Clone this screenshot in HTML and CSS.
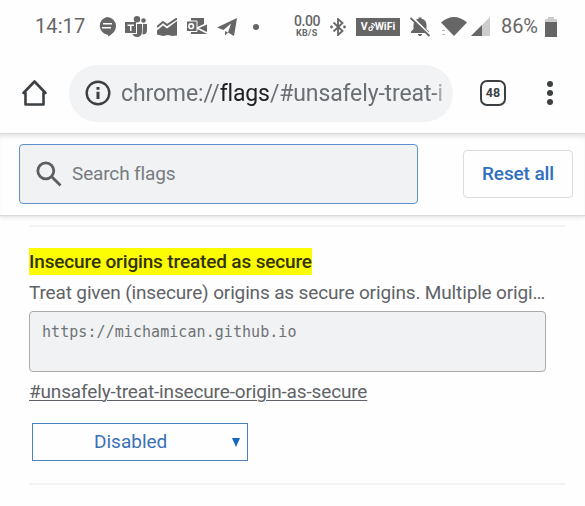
FILE: index.html
```html
<!DOCTYPE html>
<html lang="en">
<head>
<meta charset="utf-8">
<title>chrome://flags</title>
<link rel="stylesheet" href="styles.css">
</head>
<body>
<header class="status">
  <div class="group left">
    <span class="clock">14:17</span>
    <svg class="chat" width="18" height="20" viewBox="0 0 18 20"><path d="M9 0a9 9 0 0 1 9 9c0 5-4 8.500-8 10.500V17.800A9 9 0 0 1 9 0Z"/><path class="cut" d="M5 6h9v1.600H5zM4 10h9v1.600H4z"/></svg>
    <svg class="teams" width="23" height="22" viewBox="0 0 23 22"><circle cx="12" cy="3.200" r="3.200"/><circle cx="18.500" cy="4.500" r="2.300"/><path d="M12 8h5v7.500c0 3.500-2 5.500-5 5.500-2 0-3.800-1-4.500-3H12z"/><path d="M18 8h4v6c0 3-1.500 4.500-4.500 4.500z"/><path d="M0 6h11v11H0z"/><path class="cut" d="M2.500 8.500h6.500v1.500H6.500V15H5v-5H2.500z"/></svg>
    <svg class="chart" width="20" height="18" viewBox="0 0 20 18"><path d="M0 12.500 6 7.500l4 3L20 3v14.500l-5 .5-4-1-5 1L0 16.500z"/><path class="line" d="M0 9 6 4l4 3 10-6.500"/></svg>
    <svg class="mail" width="21" height="17" viewBox="0 0 21 17"><path d="M5 0h13v6h3v10H5z"/><path class="cutline" d="M21 5.500 11 10l10 5"/><path class="edge" d="M.5 3h10.500v10.500H.5z"/><circle class="ring" cx="5.200" cy="8.200" r="2.300"/></svg>
    <svg class="plane" width="20" height="18" viewBox="0 0 20 18"><path d="M0 9.500 20 0 17 18 11 14.500 14 5.500 6.500 12z"/><path d="M8 13v4.500l3-3z"/></svg>
    <i class="dot"></i>
  </div>
  <div class="group right">
    <div class="speed"><span class="rate">0.00</span><span class="unit">KB/S</span></div>
    <svg class="bt" width="16" height="18" viewBox="0 0 16 18"><path class="stroke" d="m3.500 4.500 9 8.500-4.500 4V1l4.500 4-9 8.500"/><circle cx="1.500" cy="9" r="1.400"/><circle cx="14.500" cy="9" r="1.400"/></svg>
    <span class="wifi-tag"><b>V</b><svg width="7" height="10" viewBox="0 0 8 10"><circle class="tag-ring" cx="3" cy="7" r="2"/><path class="tag-ring" d="M3.500 3.500q2 0 3 2.500M4 .8q3 0 4 3"/></svg><b>WiFi</b></span>
    <svg class="bell" width="20" height="20" viewBox="0 0 20 20"><path d="M1 16v-1.500l2.500-2.500V8c0-3 1.500-5.500 5-6.200V.5h3v1.300c3.500.7 5 3.200 5 6.200v4l2.500 2.500V16zM8 17h4c0 1.500-.8 2-2 2s-2-.5-2-2z"/><path class="cutwide" d="m2 0 18 18"/><path class="slash" d="m.5 1 19 18"/></svg>
    <svg class="wifi" width="26" height="19" viewBox="0 0 26 19"><path d="M0 5.500Q13-5.500 26 5.500L13 19z"/><path class="faint" d="M1 13h3v1H1zm0 4h3v1H1z"/></svg>
    <svg class="signal" width="19" height="19" viewBox="0 0 19 19"><path class="pale" d="M0 19 19 0v19z"/><path d="m0 19 11-11v11z"/></svg>
    <span class="percent">86%</span>
    <svg class="battery" width="12" height="20" viewBox="0 0 12 20"><path class="pale" d="M3 0h6v2h3v4H0V2h3z"/><path d="M0 5h12v15H0z"/></svg>
  </div>
</header>
<nav class="toolbar">
  <svg class="home" width="28" height="28" viewBox="0 0 28 28"><path d="M2.500 14 13.500 2.500l11 11.500H22.500v11.500H4.500V14z"/></svg>
  <div class="omnibox">
    <svg class="info" width="26" height="26" viewBox="0 0 26 26"><circle cx="13" cy="13" r="11.300"/><path d="M11.500 11.800h3V19h-3zM11.500 7h3v2.800h-3z"/></svg>
    <div class="url">chrome://<span class="host">flags</span>/#unsafely-treat-i</div>
  </div>
  <div class="tabs">48</div>
  <div class="menu"><i></i><i></i><i></i></div>
</nav>
<section class="searchbar">
  <div class="search">
    <svg width="26" height="26" viewBox="0 0 26 26"><circle cx="9.800" cy="9.800" r="8"/><path d="m16 16 8.500 8.500"/></svg>
    <span class="hint">Search flags</span>
  </div>
  <button class="reset">Reset all</button>
</section>
<main class="content">
  <article class="flag">
    <h2 class="title"><mark>Insecure origins treated as secure</mark></h2>
    <p class="desc">Treat given (insecure) origins as secure origins. Multiple origi…</p>
    <div class="origins">https://michamican.github.io</div>
    <a class="link">#unsafely-treat-insecure-origin-as-secure</a>
    <div class="select"><span>Disabled</span><svg width="8" height="9" viewBox="0 0 8 9"><path d="M0 0h8L4 9z"/></svg></div>
  </article>
</main>
</body>
</html>
```
FILE: styles.css
```css
* { box-sizing: border-box; }
body {
  margin: 0;
  width: 585px;
  height: 506px;
  overflow: hidden;
  background: #fefefe;
  color: #5f6368;
  font-family: Roboto, "Liberation Sans", sans-serif;
}
svg { display: block; flex: none; }

.status { display: flex; height: 54px; padding-left: 35px; color: #666; }
.status svg { fill: #666; }
.group { display: flex; align-items: center; height: 53px; }
.left { width: 259px; }
.clock { width: 63px; font-size: 20px; line-height: 20px; padding-bottom: 1px; letter-spacing: 0.1px; }
.percent { width: 44px; font-size: 20px; line-height: 20px; padding-bottom: 1px; letter-spacing: -0.1px; }
.status .cut { fill: #fefefe; }
.teams { margin-left: 9px; }
.chart { margin-left: 9px; }
.status .line { fill: none; stroke: #666; stroke-width: 2; }
.mail { margin-left: 9px; }
.status .cutline { fill: none; stroke: #fefefe; stroke-width: 1.6; }
.edge { stroke: #fefefe; stroke-width: 1; }
.status .ring { fill: none; stroke: #fefefe; stroke-width: 1.6; }
.plane { margin-left: 10px; }
.dot { width: 6px; height: 6px; margin-left: 16px; border-radius: 50%; background: #666; }
.speed { display: flex; flex-direction: column; width: 36px; padding-bottom: 1px; font-weight: 500; }
.rate { font-size: 14px; line-height: 14px; letter-spacing: -0.4px; }
.unit { padding-left: 2px; font-size: 9px; line-height: 10px; font-weight: 700; letter-spacing: 0.3px; }
.status .stroke { fill: none; stroke: #666; stroke-width: 1.8; }
.wifi-tag {
  display: flex; align-items: center; justify-content: center;
  width: 44px; height: 18px; margin-left: 10px;
  background: #666; color: #fefefe; font-size: 10.500px;
}
.status .tag-ring { fill: none; stroke: #fefefe; stroke-width: 1.4; }
.bell { margin-left: 10px; }
.cutwide { stroke: #fefefe; stroke-width: 2; }
.slash { stroke: #666; stroke-width: 1.8; }
.wifi { margin-left: 11px; }
.signal { margin: 0 11px 0 4px; }
.status .pale { fill: #ccc; }
.status .faint { fill: #bbb; }

.toolbar {
  display: flex; align-items: center;
  height: 79px; padding: 0 30px 1px 21px;
}
.home { fill: none; stroke: #3c4043; stroke-width: 2.6; stroke-linejoin: round; }
.omnibox {
  display: flex; align-items: center;
  width: 384px; height: 57px; margin-left: 20px; padding: 0 11px 0 16px;
  border-radius: 29px; background: #f1f3f4;
}
.info { fill: #3c4043; }
.info circle { fill: none; stroke: #3c4043; stroke-width: 2.4; }
.url {
  flex: 1; margin-left: 10px; padding-top: 2px; white-space: nowrap;
  font-size: 23px; line-height: 30px; letter-spacing: -0.13px; color: #6b6f73;
  -webkit-mask-image: linear-gradient(to right, #000 97%, #0006);
  mask-image: linear-gradient(to right, #000 97%, #0006);
}
.host { color: #202124; }
.tabs {
  width: 26px; height: 26px; margin-left: 27px;
  border: 2.500px solid #3c4043; border-radius: 7px;
  font-size: 12.500px; font-weight: 700; line-height: 22px; text-align: center; color: #3c4043;
}
.menu { display: flex; flex-direction: column; gap: 3px; margin-left: 41px; }
.menu i { width: 6px; height: 6px; border-radius: 50%; background: #3c4043; }

.searchbar {
  display: flex; align-items: center; justify-content: space-between;
  height: 82px; padding: 0 12px 0 19px;
  box-shadow: inset 0 1px #d8d8d8, inset 0 6px 6px -4px #d8d8d8, 0 1px 1px #dadada, 0 3px 4px #e8e8e8;
}
.search {
  display: flex; align-items: center;
  width: 399px; height: 60px; padding-left: 16px;
  border: 1.500px solid #5f90d0; border-radius: 4px; background: #f0f2f4;
}
.search svg { fill: none; stroke: #5c5e62; stroke-width: 2.8; }
.hint { margin-left: 10px; padding-bottom: 2px; font-size: 19px; letter-spacing: -0.15px; color: #777b80; }
.reset {
  width: 110px; height: 48px; padding: 0 0 2px;
  border: 1px solid #dadce0; border-radius: 4px; background: #fefefe;
  font: 500 19px Roboto, sans-serif; letter-spacing: -0.12px; color: #3070bd;
}

.content { padding: 10px 20px 0 29px; }
.flag {
  height: 260px; padding: 21px 0 0;
  border-top: 2px solid #f4f4f4; border-bottom: 2px solid #f4f4f4;
}
.title { margin: 0; font-size: 19px; font-weight: 500; line-height: 27px; letter-spacing: -0.15px; }
mark { display: inline-block; height: 27px; background: #fcfc03; color: #33330a; white-space: nowrap; }
.desc { margin: 5px 0; font-size: 19px; line-height: 26px; letter-spacing: -0.145px; white-space: nowrap; }
.origins {
  width: 517px; height: 61px; padding: 10px 12px;
  border: 1px solid #aaa; border-radius: 4px; background: #f0f2f3;
  font-family: "DejaVu Sans Mono", monospace; font-size: 15px; line-height: 20px;
  letter-spacing: 0.06px; color: #6f7276;
}
.link {
  display: block; width: max-content; margin-top: 7px;
  font-size: 19px; line-height: 26px; letter-spacing: -0.15px; text-decoration: underline;
  text-decoration-thickness: 1px; text-underline-offset: 2px;
}
.select {
  display: flex; align-items: center;
  width: 216px; height: 38px; margin: 18px 0 0 3px; padding: 0 7px 0 61px;
  border: 1.500px solid #4a80c0; color: #3a70b5; font-size: 19px;
}
.select span { padding-bottom: 2px; }
.select svg { margin-left: auto; fill: #1967c0; }
```
